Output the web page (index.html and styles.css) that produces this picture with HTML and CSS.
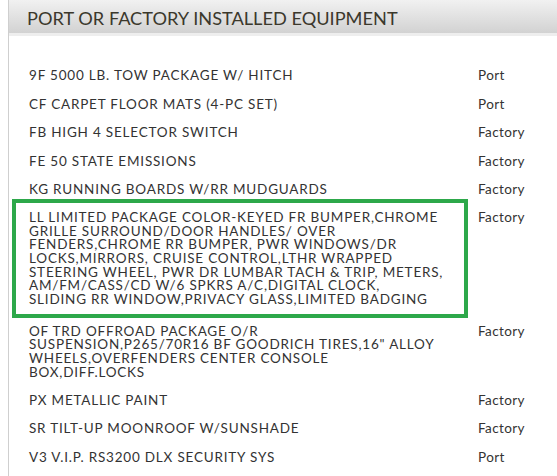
FILE: index.html
```html
<!DOCTYPE html>
<html lang="en">
<head>
    <meta charset="UTF-8">
    <meta name="viewport" content="width=device-width, initial-scale=1.0">
    <title>Installed Equipment</title>
    <link rel="stylesheet" href="styles.css">
</head>
<body>
    <div class="panel">
        <div class="panel-head">
            <h2>PORT OR FACTORY INSTALLED EQUIPMENT</h2>
        </div>
        <div class="equip-list">
            <div class="equip-row">
                <div class="equip-name">9F 5000 LB. TOW PACKAGE W/ HITCH</div>
                <div class="equip-src">Port</div>
            </div>
            <div class="equip-row">
                <div class="equip-name">CF CARPET FLOOR MATS (4-PC SET)</div>
                <div class="equip-src">Port</div>
            </div>
            <div class="equip-row">
                <div class="equip-name">FB HIGH 4 SELECTOR SWITCH</div>
                <div class="equip-src">Factory</div>
            </div>
            <div class="equip-row">
                <div class="equip-name">FE 50 STATE EMISSIONS</div>
                <div class="equip-src">Factory</div>
            </div>
            <div class="equip-row">
                <div class="equip-name">KG RUNNING BOARDS W/RR MUDGUARDS</div>
                <div class="equip-src">Factory</div>
            </div>
            <div class="equip-row highlight">
                <div class="equip-name">LL LIMITED PACKAGE COLOR-KEYED FR BUMPER,CHROME<br>
                    GRILLE SURROUND/DOOR HANDLES/ OVER<br>
                    FENDERS,CHROME RR BUMPER, PWR WINDOWS/DR<br>
                    LOCKS,MIRRORS, CRUISE CONTROL,LTHR WRAPPED<br>
                    STEERING WHEEL, PWR DR LUMBAR TACH &amp; TRIP, METERS,<br>
                    AM/FM/CASS/CD W/6 SPKRS A/C,DIGITAL CLOCK,<br>
                    SLIDING RR WINDOW,PRIVACY GLASS,LIMITED BADGING</div>
                <div class="equip-src">Factory</div>
            </div>
            <div class="equip-row">
                <div class="equip-name">OF TRD OFFROAD PACKAGE O/R<br>
                    SUSPENSION,P265/70R16 BF GOODRICH TIRES,16" ALLOY<br>
                    WHEELS,OVERFENDERS CENTER CONSOLE<br>
                    BOX,DIFF.LOCKS</div>
                <div class="equip-src">Factory</div>
            </div>
            <div class="equip-row">
                <div class="equip-name">PX METALLIC PAINT</div>
                <div class="equip-src">Factory</div>
            </div>
            <div class="equip-row">
                <div class="equip-name">SR TILT-UP MOONROOF W/SUNSHADE</div>
                <div class="equip-src">Factory</div>
            </div>
            <div class="equip-row">
                <div class="equip-name">V3 V.I.P. RS3200 DLX SECURITY SYS</div>
                <div class="equip-src">Port</div>
            </div>
        </div>
    </div>
</body>
</html>
```

FILE: styles.css
```css
body {
    margin: 0 0 0 8px;
    padding: 0;
    background-color: white;
    font-family: Lato, "Open Sans", sans-serif;
    color: #333;
}
.panel {
    border-left: 1px solid #cfcfcf;
    min-height: 476px;
}
.panel-head {
    height: 33px;
    background: linear-gradient(#f1f1f1, #d2d2d2);
    border-bottom: 3px solid #eeeeee;
}
.panel-head h2 {
    margin: 0;
    padding: 6px 0 0 18px;
    font-size: 18.2px;
    font-weight: normal;
    line-height: 24px;
    color: #3b382c;
}
.equip-list {
    padding: 26px 0 0 20px;
}
.equip-row {
    display: grid;
    grid-template-columns: 420px 1fr;
    gap: 29px;
    padding: 7.4px 0;
    font-size: 13.5px;
    line-height: 13.6px;
    letter-spacing: 0.8px;
}
.equip-row.highlight {
    position: relative;
    padding-bottom: 11px;
}
.equip-row.highlight::after {
    content: "";
    position: absolute;
    left: -17px;
    top: -5px;
    width: 448px;
    height: 111px;
    border: 4px solid #2da84a;
}
.equip-src {
    letter-spacing: 0.4px;
}
```
